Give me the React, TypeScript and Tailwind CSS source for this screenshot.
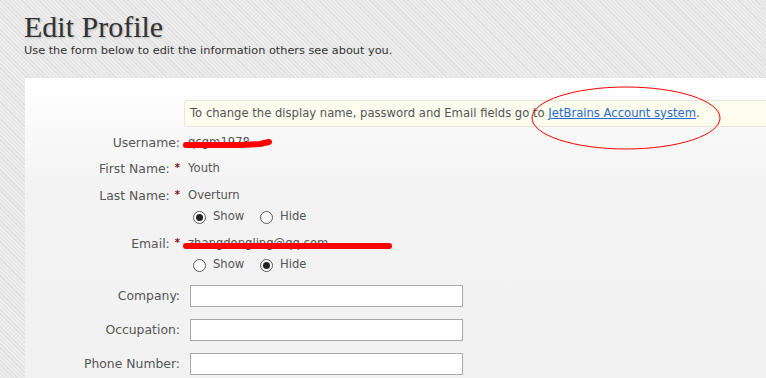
import React from 'react';

const body = { fontFamily: '"DejaVu Sans", Verdana, sans-serif' };

const Radio = ({ checked }: { checked?: boolean }) => (
  <span className="inline-flex h-[13px] w-[13px] items-center justify-center rounded-full border border-[#5a5a5a] bg-white">
    {checked && <span className="h-[7px] w-[7px] rounded-full bg-[#222]" />}
  </span>
);

const ShowHide = ({ show }: { show: boolean }) => (
  <div className="flex h-4 items-center pl-[5px] text-[#555]">
    <Radio checked={show} />
    <span className="ml-[7px] w-[47px]">Show</span>
    <Radio checked={!show} />
    <span className="ml-[7px]">Hide</span>
  </div>
);

const Label = ({ text, required }: { text: string; required?: boolean }) => (
  <div className="w-[155px] shrink-0 text-right text-[12.4px] text-[#555]">
    {text}
    {required && <span className="relative top-[-2px] ml-[5px] text-[10px] font-bold text-[#8a1010]">*</span>}
  </div>
);

const Strike = ({ width, d }: { width: number; d: string }) => (
  <svg className="pointer-events-none absolute left-[-8px] top-[-3px]" width={width} height="24" viewBox={`0 0 ${width} 24`}>
    <path d={d} stroke="#ff0000" strokeWidth="6" strokeLinecap="round" fill="none" />
  </svg>
);

const TextRow = ({ label }: { label: string }) => (
  <div className="mt-[12px] flex h-[22px] items-center">
    <Label text={label} />
    <input className="ml-[10px] h-[22px] w-[273px] border border-[#a8a8b0] bg-white" />
  </div>
);

export default function App() {
  return (
    <div
      className="relative h-[378px] w-[766px] overflow-hidden bg-[repeating-linear-gradient(45deg,#e0e0e0_0px,#e0e0e0_1px,#ececec_1px,#ececec_3px)] text-[11.6px]"
      style={body}
    >
      <div className="h-[78px] pl-6 pt-[11px]">
        <h1
          className="text-[30px] leading-[32px] text-[#333] [text-shadow:1px_1px_2px_rgba(0,0,0,0.2)]"
          style={{ fontFamily: '"Liberation Serif", "Times New Roman", serif' }}
        >
          Edit Profile
        </h1>
        <p className="text-[11.3px] text-[#333]">Use the form below to edit the information others see about you.</p>
      </div>

      <div className="ml-[25px] h-[300px] bg-[linear-gradient(to_bottom,#ffffff_0px,#f3f3f3_110px,#f2f2f2_100%)] pt-[22px]">
        <div className="ml-[159px] flex h-[27px] items-center rounded-l-[4px] border border-r-0 border-[#e6e6d6] bg-[#fcfcef] pl-[5px] text-[#555]">
          To change the display name, password and Email fields go to&nbsp;
          <a href="#" className="text-[#2a6acb] underline">JetBrains Account system</a>.
        </div>

        <div className="mt-[4px] flex h-6 items-center">
          <Label text="Username:" />
          <div className="relative ml-2 text-[#555]">
            qcgm1978
            <Strike width={100} d="M6 14 L60 14 L80 13 L89 11" />
          </div>
        </div>

        <div className="mt-[2px] flex h-6 items-center">
          <Label text="First Name:" required />
          <div className="ml-2 text-[#555]">Youth</div>
        </div>

        <div className="mt-[3px] flex h-6 items-center">
          <Label text="Last Name:" required />
          <div className="ml-2 text-[#555]">Overturn</div>
        </div>
        <div className="ml-[163px] mt-[1px]">
          <ShowHide show={true} />
        </div>

        <div className="mt-[7px] flex h-6 items-center">
          <Label text="Email:" required />
          <div className="relative ml-2 text-[#555]">
            zhangdongling@qq.com
            <Strike width={220} d="M6 14 L209 14" />
          </div>
        </div>
        <div className="ml-[163px] mt-[1px]">
          <ShowHide show={false} />
        </div>

        <TextRow label="Company:" />
        <TextRow label="Occupation:" />
        <TextRow label="Phone Number:" />
      </div>

      <svg className="pointer-events-none absolute left-0 top-0" width="766" height="378">
        <ellipse cx="626" cy="118" rx="94" ry="31" fill="none" stroke="#ff0000" strokeWidth="1" />
      </svg>
    </div>
  );
}
